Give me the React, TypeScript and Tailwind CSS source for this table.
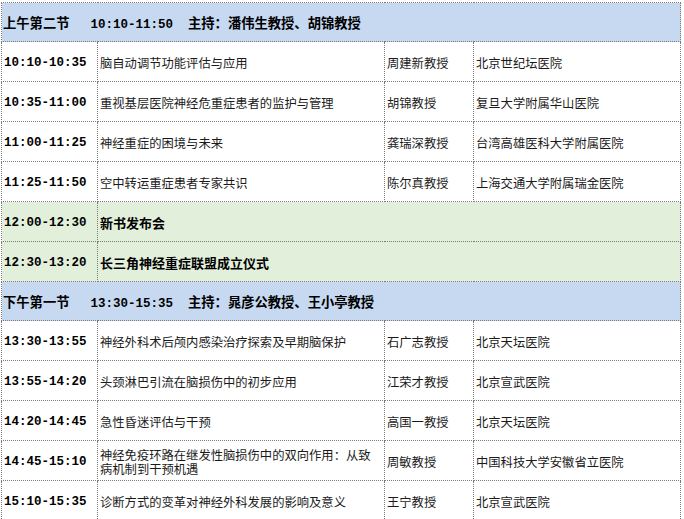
const cjk = '"Noto Sans CJK SC", "Noto Sans", sans-serif';
const mono = '"Liberation Mono", "DejaVu Sans Mono", monospace';

type Talk = { time: string; topic: React.ReactNode; speaker: string; place: string };

const morning: Talk[] = [
  { time: '10:10-10:35', topic: '脑自动调节功能评估与应用', speaker: '周建新教授', place: '北京世纪坛医院' },
  { time: '10:35-11:00', topic: '重视基层医院神经危重症患者的监护与管理', speaker: '胡锦教授', place: '复旦大学附属华山医院' },
  { time: '11:00-11:25', topic: '神经重症的困境与未来', speaker: '龚瑞深教授', place: '台湾高雄医科大学附属医院' },
  { time: '11:25-11:50', topic: '空中转运重症患者专家共识', speaker: '陈尔真教授', place: '上海交通大学附属瑞金医院' },
];

const afternoon: Talk[] = [
  { time: '13:30-13:55', topic: '神经外科术后颅内感染治疗探索及早期脑保护', speaker: '石广志教授', place: '北京天坛医院' },
  { time: '13:55-14:20', topic: '头颈淋巴引流在脑损伤中的初步应用', speaker: '江荣才教授', place: '北京宣武医院' },
  { time: '14:20-14:45', topic: '急性昏迷评估与干预', speaker: '高国一教授', place: '北京天坛医院' },
  {
    time: '14:45-15:10',
    topic: (
      <>
        神经免疫环路在继发性脑损伤中的双向作用：从致
        <br />
        病机制到干预机遇
      </>
    ),
    speaker: '周敏教授',
    place: '中国科技大学安徽省立医院',
  },
  { time: '15:10-15:35', topic: '诊断方式的变革对神经外科发展的影响及意义', speaker: '王宁教授', place: '北京宣武医院' },
];

const cell = 'border border-dotted border-[#7a7a7a] align-middle pt-[3px]';

function Section({ label, time, host }: { label: string; time: string; host: string }) {
  return (
    <tr className="h-[39px] bg-[#c6d9f1]">
      <td colSpan={4} className={`${cell} pl-[1px] font-bold text-[13.3px] text-black`}>
        <span style={{ fontFamily: cjk }}>{label}</span>
        <span className="ml-[21px] text-[12.5px]" style={{ fontFamily: mono }}>
          {time}
        </span>
        <span className="ml-[15px]" style={{ fontFamily: cjk }}>
          主持：{host}
        </span>
      </td>
    </tr>
  );
}

function TalkRow({ t }: { t: Talk }) {
  return (
    <tr className="h-[40px] bg-white">
      <td className={`${cell} pl-[2px] font-bold text-[12.5px] text-black`} style={{ fontFamily: mono }}>
        {t.time}
      </td>
      <td className={`${cell} pl-[2px] text-[12.3px] leading-[14px] text-[#1a1a1a]`} style={{ fontFamily: cjk }}>
        {t.topic}
      </td>
      <td className={`${cell} pl-[2px] text-[12.3px] text-[#1a1a1a]`} style={{ fontFamily: cjk }}>
        {t.speaker}
      </td>
      <td className={`${cell} pl-[2px] text-[12.3px] text-[#1a1a1a]`} style={{ fontFamily: cjk }}>
        {t.place}
      </td>
    </tr>
  );
}

function Ceremony({ time, title }: { time: string; title: string }) {
  return (
    <tr className="h-[40px] bg-[#e2efda]">
      <td className={`${cell} pl-[2px] font-bold text-[12.5px] text-black`} style={{ fontFamily: mono }}>
        {time}
      </td>
      <td colSpan={3} className={`${cell} pl-[2px] font-bold text-[13px] text-black`} style={{ fontFamily: cjk }}>
        {title}
      </td>
    </tr>
  );
}

export default function App() {
  return (
    <div className="w-[684px] h-[519px] overflow-hidden bg-white pl-[1px] pt-[2px]">
      <table className="border-collapse table-fixed w-[679px] border border-dotted border-[#555]">
        <colgroup>
          <col className="w-[96px]" />
          <col className="w-[287px]" />
          <col className="w-[89px]" />
          <col className="w-[207px]" />
        </colgroup>
        <tbody>
          <Section label="上午第二节" time="10:10-11:50" host="潘伟生教授、胡锦教授" />
          {morning.map((t) => (
            <TalkRow key={t.time} t={t} />
          ))}
          <Ceremony time="12:00-12:30" title="新书发布会" />
          <Ceremony time="12:30-13:20" title="长三角神经重症联盟成立仪式" />
          <Section label="下午第一节" time="13:30-15:35" host="晁彦公教授、王小亭教授" />
          {afternoon.map((t) => (
            <TalkRow key={t.time} t={t} />
          ))}
        </tbody>
      </table>
    </div>
  );
}
